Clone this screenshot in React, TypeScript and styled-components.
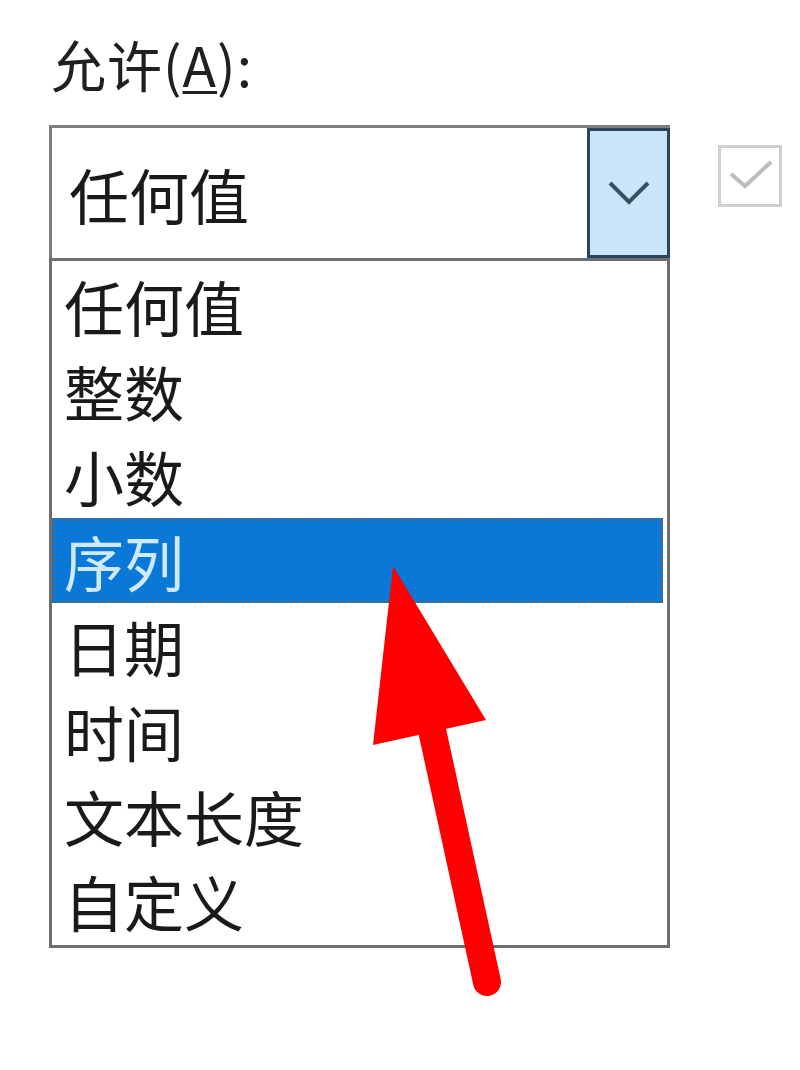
import * as React from 'react'
import styled, { createGlobalStyle, css } from 'styled-components'

const GlobalStyle = createGlobalStyle`
  html, body {
    margin: 0;
    padding: 0;
    background: #ffffff;
  }
  body {
    font-family: "Noto Sans CJK SC", "Noto Sans", "Liberation Sans", sans-serif;
    color: #1f1f1f;
  }
`

const Page = styled.div`
  position: relative;
  width: 800px;
  height: 1070px;
  padding: 27px 0 0 49px;
  box-sizing: border-box;
  display: flex;
  flex-direction: column;
`

const Label = styled.div`
  font-size: 55px;
  line-height: 72px;
  height: 72px;
  margin-bottom: 26px;
  padding-left: 2px;
  letter-spacing: 1px;
  color: #202020;

  u {
    text-decoration-thickness: 3px;
    text-underline-offset: 4px;
  }
`

const Row = styled.div`
  display: flex;
  align-items: flex-start;
  gap: 48px;
`

const Field = styled.div`
  display: flex;
  flex-direction: column;
  width: 621px;
`

const Combo = styled.div`
  display: flex;
  height: 133px;
  border: 3px solid #7d7d7d;
  border-bottom: none;
  box-sizing: border-box;
  background: #ffffff;
`

const ComboValue = styled.div`
  flex: 1;
  display: flex;
  align-items: center;
  padding-left: 17px;
  font-size: 60px;
  color: #1a1a1a;
`

const DropButton = styled.div`
  width: 83px;
  margin: 0 -3px 0 0;
  background: #cce4f7;
  border: 3px solid #2a4560;
  box-sizing: border-box;
  display: flex;
  align-items: center;
  justify-content: center;
`

const List = styled.div`
  border: 3px solid #6e6e6e;
  padding: 2px 2px 2px 0;
  background: #ffffff;
  display: flex;
  flex-direction: column;
`

const Item = styled.div<{ selected?: boolean }>`
  height: 85px;
  box-sizing: border-box;
  display: flex;
  align-items: center;
  padding-left: 12px;
  font-size: 60px;
  color: #1a1a1a;
  ${({ selected }) =>
    selected &&
    css`
      background: #0a78d7;
      color: #cfe9ff;
      outline: 3px dotted #4a6a8a;
      outline-offset: -3px;
      margin-right: 2px;
    `}
`

const CheckBox = styled.div`
  width: 64px;
  height: 62px;
  margin-top: 20px;
  border: 3px solid #d0d0d0;
  box-sizing: border-box;
  display: flex;
  align-items: center;
  justify-content: center;
`

const Arrow = styled.svg`
  position: absolute;
  left: 0;
  top: 0;
  pointer-events: none;
`

const items = ['任何值', '整数', '小数', '序列', '日期', '时间', '文本长度', '自定义']

export default function App() {
  return (
    <>
      <GlobalStyle />
      <Page>
        <Label>
          允许(<u>A</u>):
        </Label>
        <Row>
          <Field>
            <Combo>
              <ComboValue>任何值</ComboValue>
              <DropButton>
                <svg width="44" height="28" viewBox="0 0 44 28">
                  <path d="M3 4 L22 23 L41 4" fill="none" stroke="#34506a" strokeWidth="4" />
                </svg>
              </DropButton>
            </Combo>
            <List>
              {items.map((label) => (
                <Item key={label} selected={label === '序列'}>
                  {label}
                </Item>
              ))}
            </List>
          </Field>
          <CheckBox>
            <svg width="50" height="40" viewBox="0 0 50 40">
              <path d="M6 18 L20 30 L46 6" fill="none" stroke="#bdbdbd" strokeWidth="4" />
            </svg>
          </CheckBox>
        </Row>
        <Arrow width="800" height="1070" viewBox="0 0 800 1070">
          <polygon points="393,566 373,745 486,720" fill="#ff0000" />
          <line x1="432" y1="730" x2="487" y2="982" stroke="#ff0000" strokeWidth="28" strokeLinecap="round" />
        </Arrow>
      </Page>
    </>
  )
}
